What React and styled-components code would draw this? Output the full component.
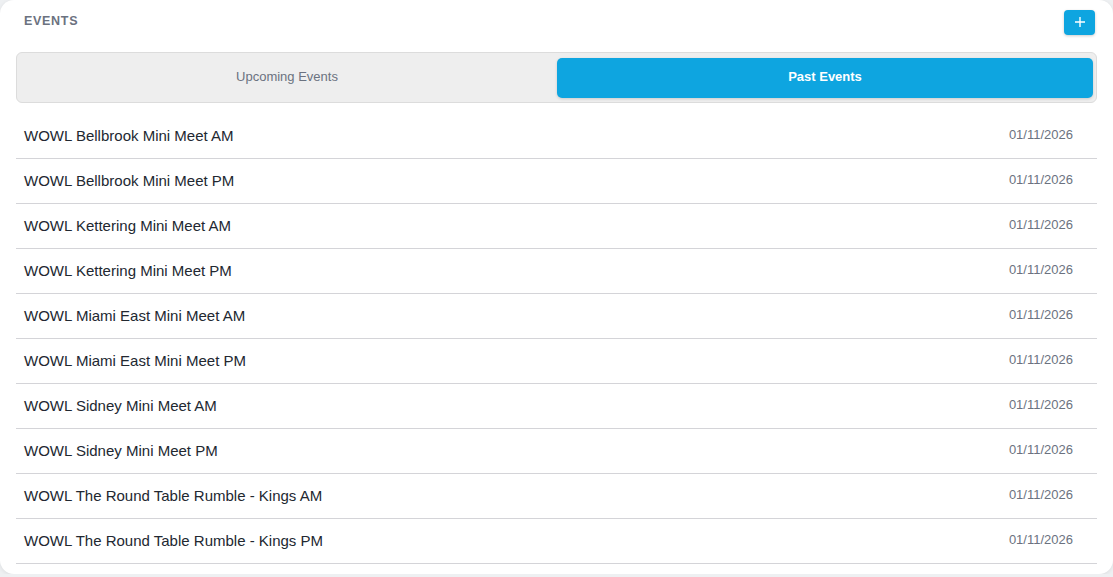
import React, { useState } from 'react';
import styled, { createGlobalStyle } from 'styled-components';

const GlobalStyle = createGlobalStyle`
  body {
    margin: 0;
    background: #eef0f2;
    font-family: 'Liberation Sans', Arial, sans-serif;
  }
`;

const Card = styled.div`
  width: 1113px;
  height: 574px;
  box-sizing: border-box;
  background: #fff;
  border-radius: 14px;
  box-shadow: 0 1px 4px rgba(0, 0, 0, 0.08);
  padding: 9px 16px 0 16px;
`;

const Header = styled.div`
  display: flex;
  align-items: center;
  justify-content: space-between;
  height: 27px;
  padding-left: 8px;
  padding-right: 2px;
`;

const Title = styled.h2`
  margin: -3px 0 0 0;
  font-size: 12.5px;
  font-weight: 700;
  letter-spacing: 0.7px;
  color: #6b7280;
  text-transform: uppercase;
`;

const AddButton = styled.button`
  width: 31px;
  height: 25px;
  margin-top: -1px;
  border: none;
  border-radius: 4px;
  background: #0ea5e0;
  color: #fff;
  display: flex;
  align-items: center;
  justify-content: center;
  padding: 0;
  cursor: pointer;
  box-shadow: 0 1px 3px rgba(0, 0, 0, 0.2);
`;

const Tabs = styled.div`
  margin-top: 16px;
  display: grid;
  grid-template-columns: 1fr 536px;
  gap: 4px;
  padding: 5px 3px 4px 4px;
  height: 51px;
  box-sizing: border-box;
  background: #eeeeee;
  border: 1px solid #dcdcdc;
  border-radius: 6px;
`;

const Tab = styled.button`
  border: none;
  border-radius: 5px;
  font-family: inherit;
  font-size: 13px;
  padding: 0 0 3px 0;
  cursor: pointer;
  background: ${p => (p.$active ? '#0ea5e0' : 'transparent')};
  color: ${p => (p.$active ? '#fff' : '#6b7280')};
  font-weight: ${p => (p.$active ? 700 : 400)};
  box-shadow: ${p => (p.$active ? '0 1px 3px rgba(0,0,0,0.15)' : 'none')};
`;

const List = styled.ul`
  list-style: none;
  margin: 11px 0 0 0;
  padding: 0;
`;

const Row = styled.li`
  display: flex;
  align-items: center;
  justify-content: space-between;
  height: 45px;
  box-sizing: border-box;
  border-bottom: 1px solid #d4d4d8;
  padding: 0 24px 2px 8px;
`;

const Name = styled.span`
  font-size: 15px;
  color: #222831;
`;

const DateText = styled.span`
  font-size: 13px;
  color: #6b7280;
  margin-top: -2px;
`;

const events = [
  'WOWL Bellbrook Mini Meet AM',
  'WOWL Bellbrook Mini Meet PM',
  'WOWL Kettering Mini Meet AM',
  'WOWL Kettering Mini Meet PM',
  'WOWL Miami East Mini Meet AM',
  'WOWL Miami East Mini Meet PM',
  'WOWL Sidney Mini Meet AM',
  'WOWL Sidney Mini Meet PM',
  'WOWL The Round Table Rumble - Kings AM',
  'WOWL The Round Table Rumble - Kings PM',
];

export default function App() {
  const [tab, setTab] = useState('past');

  return (
    <>
      <GlobalStyle />
      <Card>
        <Header>
          <Title>Events</Title>
          <AddButton aria-label="Add event">
            <svg width="12" height="12" viewBox="0 0 12 12">
              <path d="M6 1v10M1 6h10" stroke="#fff" strokeWidth="1.4" />
            </svg>
          </AddButton>
        </Header>
        <Tabs>
          <Tab $active={tab === 'upcoming'} onClick={() => setTab('upcoming')}>Upcoming Events</Tab>
          <Tab $active={tab === 'past'} onClick={() => setTab('past')}>Past Events</Tab>
        </Tabs>
        <List>
          {events.map(name => (
            <Row key={name}>
              <Name>{name}</Name>
              <DateText>01/11/2026</DateText>
            </Row>
          ))}
        </List>
      </Card>
    </>
  );
}
